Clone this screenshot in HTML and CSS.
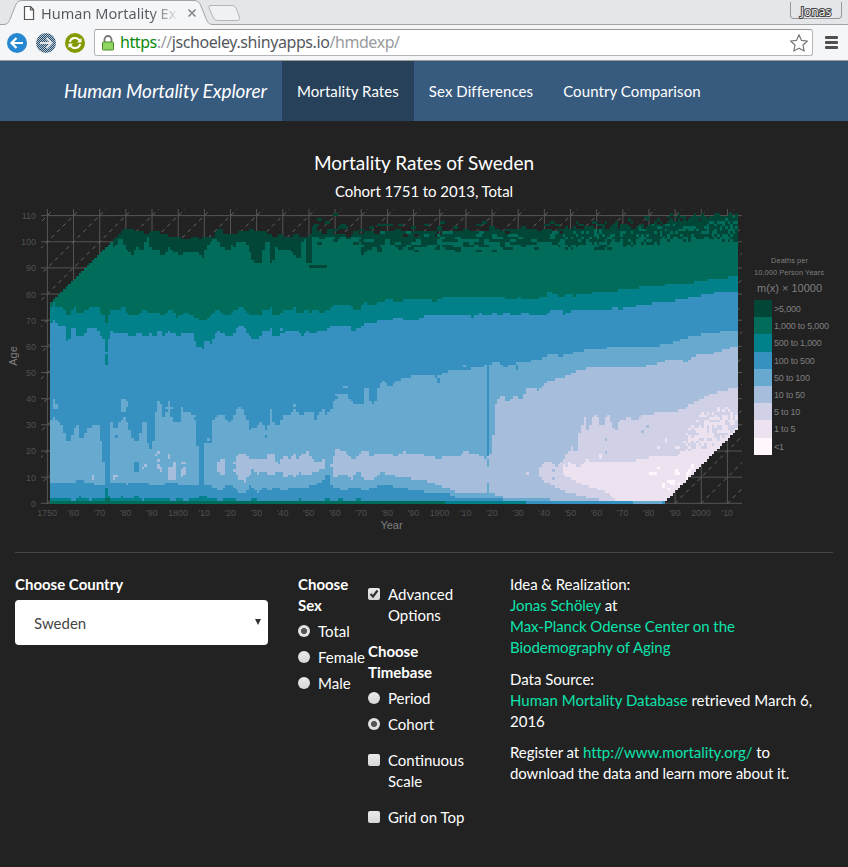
FILE: index.html
```html
<!DOCTYPE html>
<html lang="en">
<head>
<meta charset="utf-8">
<title>Human Mortality Explorer</title>
<link rel="stylesheet" href="styles.css">
</head>
<body>
<div class="browser">
  <div class="tabstrip">
    <svg class="tabshape" width="250" height="26" viewBox="0 0 250 26">
      <path d="M0 24.5H3C8 24.5 9 22 10.500 18L15.500 5.500C17 2 18.500 .5 22 .5H194C198 .5 199.500 2.500 201 6L206 18.500C208 23 209 24.500 213 24.500V26H0Z" fill="#f5f6f7"/>
      <path d="M0 24.500H3C8 24.500 9 22 10.500 18L15.500 5.500C17 2 18.500 .5 22 .5H194C198 .5 199.500 2.500 201 6L206 18.500C208 23 209 24.500 213 24.500H250" fill="none" stroke="#a3a4a6"/>
      <path d="M211 5.500H232Q235 5.500 236 8L239.500 17Q240.500 20.500 237 20.500H218Q214.500 20.500 213.500 18L209 8Q208 5.500 211 5.500Z" fill="#f0f1f3" stroke="#b3b4b6"/>
      <path d="M24.500 6.500H30.500L33.500 9.500V19.500H24.500ZM30.500 6.500V10H33.500" fill="#fff" stroke="#555" stroke-width="1.200"/>
      <path d="M188.500 9.500L195.500 16.500M195.500 9.500L188.500 16.500" stroke="#85878c" stroke-width="1.700"/>
    </svg>
    <span class="tabtitle">Human Mortality Ex</span>
    <span class="user">Jonas</span>
  </div>
  <div class="toolbar">
    <svg class="round" viewBox="0 0 20 20"><circle cx="10" cy="10" r="10" fill="#2588d0"/><path d="M16 10H5M9.500 5L4.500 10L9.500 15" stroke="#fff" stroke-width="2.200" fill="none"/></svg>
    <svg class="round" viewBox="0 0 20 20"><defs><pattern id="chk" width="2" height="2" patternUnits="userSpaceOnUse"><rect width="2" height="2" fill="#b9c3cc"/><rect width="1" height="1" fill="#244e70"/><rect x="1" y="1" width="1" height="1" fill="#244e70"/></pattern></defs><circle cx="10" cy="10" r="10" fill="url(#chk)"/><path d="M4 10H15M10.500 5L15.500 10L10.500 15" stroke="#dfe4e8" stroke-width="2" fill="none"/></svg>
    <svg class="round" viewBox="0 0 20 20"><circle cx="10" cy="10" r="10" fill="#859900"/><path d="M4.800 9A5.300 5.300 0 0 1 14.500 7.500M15.200 11A5.300 5.300 0 0 1 5.500 12.500" stroke="#fff" stroke-width="2" fill="none"/><path d="M16.500 5V9.500H12ZM3.500 15V10.500H8Z" fill="#fff"/></svg>
    <div class="address">
      <svg width="12" height="16" viewBox="0 0 12 16"><path d="M2.500 8V4.500A3.500 3.500 0 0 1 9.500 4.500V8" fill="none" stroke="#777" stroke-width="1.800"/><rect x=".5" y="7" width="11" height="8" rx="1" fill="#8ed65f" stroke="#4c8c2b"/></svg>
      <span class="url"><b>https</b><i>://</i>jschoeley.shinyapps.io<i>/hmdexp/</i></span>
      <svg class="star" width="18" height="18" viewBox="0 0 18 18"><path d="M9 .8L11.400 6.300L17.400 7L13 11L14.200 17L9 14.200L3.800 17L5 11L.6 7L6.600 6.300Z" fill="#fff" stroke="#777" stroke-width="1.200" stroke-linejoin="round"/></svg>
    </div>
    <div class="burger"><span></span><span></span><span></span></div>
  </div>
</div>
<nav class="navbar">
  <a class="brand">Human Mortality Explorer</a>
  <a class="tab active">Mortality Rates</a>
  <a class="tab">Sex Differences</a>
  <a class="tab">Country Comparison</a>
</nav>
<main>
  <h1>Mortality Rates of Sweden</h1>
  <h2>Cohort 1751 to 2013, Total</h2>
  <svg id="plot" class="plot" width="848" height="340" viewBox="0 200 848 340"></svg>
  <hr>
  <div class="controls">
    <section class="country">
      <strong>Choose Country</strong>
      <div class="select"><span>Sweden</span><i class="arrow"></i></div>
    </section>
    <section class="sex">
      <strong>Choose Sex</strong>
      <label><i class="radio on"></i>Total</label>
      <label><i class="radio"></i>Female</label>
      <label><i class="radio"></i>Male</label>
    </section>
    <section class="options">
      <label class="first"><i class="check"><svg width="12" height="12" viewBox="0 0 12 12"><path d="M2.500 6L5 8.500L9.500 2.500" fill="none" stroke="#333" stroke-width="2.200"/></svg></i>Advanced Options</label>
      <strong>Choose Timebase</strong>
      <label><i class="radio"></i>Period</label>
      <label><i class="radio on"></i>Cohort</label>
      <label class="apart"><i class="check"></i>Continuous Scale</label>
      <label class="apart"><i class="check"></i>Grid on Top</label>
    </section>
    <section class="about">
      <p class="snug">Idea &amp; Realization:<br><a>Jonas Schöley</a> at<br><a>Max-Planck Odense Center on the<br>Biodemography of Aging</a></p>
      <p>Data Source:<br><a>Human Mortality Database</a> retrieved March 6,<br>2016</p>
      <p class="snug">Register at <a>http://www.mortality.org/</a> to<br><span class="snugger">download the data and learn more about it.</span></p>
    </section>
  </div>
</main>
<script src="plot.js"></script>
</body>
</html>
```
FILE: styles.css
```css
* { box-sizing: border-box; }
body { margin: 0; background: #222; color: #fff; font: 15px/21px Lato, sans-serif; }
.browser { height: 61px; background: #f5f6f7; border-bottom: 1px solid #9b9b9b; font-family: "Noto Sans", sans-serif; color: #555860; }
.tabstrip { height: 25px; background: #e5e6ea; position: relative; border-bottom: 1px solid #a3a4a6; }
.tabshape { position: absolute; left: 0; top: 0; }
.tabtitle { position: absolute; left: 41px; top: 2px; white-space: nowrap; font-size: 14.5px; line-height: 22px; letter-spacing: .02px; color: transparent; background: linear-gradient(90deg, #555860 82%, rgba(85,88,96,.15)); -webkit-background-clip: text; background-clip: text; }
.user { position: absolute; right: 6px; top: 2px; width: 52px; height: 17px; border: 1px solid #999; border-top: 0; border-radius: 0 0 4px 4px; text-align: center; font-size: 12px; line-height: 19px; color: #eee; -webkit-text-stroke: 2px #444; paint-order: stroke fill; }
.toolbar { height: 35px; display: flex; align-items: center; padding-left: 7px; }
.round { width: 20px; height: 20px; margin-right: 9px; flex: none; }
.address { width: 719px; height: 27px; border: 1px solid #b3b5b8; border-top-color: #999; border-radius: 3px; background: #fff; display: flex; align-items: center; padding: 0 4px 0 7px; }
.url { margin-left: 6px; font-size: 16px; color: #555860; white-space: nowrap; letter-spacing: -.42px; }
.url b { color: #0b8a0b; font-weight: 400; }
.url i { color: #999ba0; font-style: normal; }
.star { margin-left: auto; }
.burger { margin-left: 12px; display: flex; flex-direction: column; gap: 2px; }
.burger span { width: 13px; height: 3px; border-radius: 1px; background: #505050; }
.navbar { height: 60px; background: #375a7f; display: flex; line-height: 60px; padding-left: 49px; }
.navbar a { padding: 0 15px; white-space: nowrap; }
.navbar .brand { font-size: 19px; font-style: italic; width: 233px; letter-spacing: -.08px; }
.tab { letter-spacing: .08px; }
.active { background: #28415b; }
h1, h2 { margin: 0; font-weight: 400; text-align: center; }
h1 { font-size: 19px; line-height: 21px; padding-top: 31px; }
h2 { font-size: 15px; line-height: 21px; padding-top: 8px; height: 27px; letter-spacing: -.06px; }
.plot { display: block; }
.plot text { font-family: "Liberation Sans", sans-serif; }
hr { margin: 12px 15px 0; border: 0; border-top: 1px solid #464646; }
.controls { display: grid; grid-template-columns: 283px 70px 142px 1fr; padding: 21px 0 0 15px; }
.country { width: 253px; }
strong { display: block; font-weight: 700; }
.sex strong { width: 60px; }
.select { margin-top: 5px; height: 45px; background: #fff; border-radius: 4px; color: #464545; display: flex; justify-content: space-between; align-items: center; padding: 2px 7px 0 19px; }
.arrow { border: 3px solid transparent; border-top: 6px solid #333; margin-top: 0; }
label { display: flex; padding-left: 20px; margin-top: 5px; }
label i { flex: none; width: 12px; height: 12px; margin: 4px 8px 0 -20px; background: linear-gradient(#eaeaea, #d7d7d7); }
.radio { border-radius: 50%; }
.on { background: radial-gradient(circle, #555 0 2.700px, #e2e2e2 3.400px); }
.check { border-radius: 2px; }
.check svg { display: block; }
.options { width: 105px; }
.options .first { margin-top: 10px; margin-bottom: 15px; }
.options .apart { margin-top: 15px; }
p { margin: 0 0 11px; white-space: nowrap; }
p + p { margin-bottom: 10px; }
p a { color: #0ce3ac; }
.snug { letter-spacing: -.05px; }
.snugger { letter-spacing: -.1px; }
```
FILE: plot.js
```js
// Lexis surface: one column per cohort, one row per year of age.
var STEP = 2.616, X0 = 50, Y0 = 503.5, COLS = 263, ROWS = 111;
var COLORS = ["#014636", "#016c59", "#02818a", "#3690c0", "#67a9cf", "#a6bddb", "#d0d1e6", "#ece2f0", "#fff7fb"];
var NAMES = [">5,000", "1,000 to 5,000", "500 to 1,000", "100 to 500", "50 to 100", "10 to 50", "5 to 10", "1 to 5", "<1"];

// Contours as flat x,y lists.
var TOP = [50,304,124,229,134,229,134,231,144,231,144,236,152,231,158,231,159,233,167,235,171,236,182,236,182,239,190,239,193,236,197,236,199,239,205,236,214,236,217,229,222,229,223,234,236,234,240,232,246,231,250,229,258,232,262,231,270,234,275,237,280,234,285,238,295,235,305,236,312,235,350,233,420,232,500,230,580,229,640,226,670,222,700,217,738,214];
var DARK = [50,200,112,200,113,245,115,250,118,240,122,239,125,247,130,252,133,255,136,247,142,251,146,241,148,236,150,248,158,250,163,256,168,252,169,247,175,252,181,257,184,252,190,252,194,254,198,251,203,257,206,248,211,242,216,238,217,240,222,247,229,250,231,242,233,251,236,242,246,242,251,254,253,262,262,262,262.1,254,266,242,270,242,270.1,262,275,260,276,246,278,250,283,248,290,251,298,259,301,255,301.1,242,306,240,306.1,262,313,262,316,240,738,220];
var TEAL = [50,307,60,307,64,310,66,315,71,315,73,307,75,307,77,312,84,312,86,310,94,307,100,307,101,312,105,317,106,323,108,321,110,310,120,310,122,307,126,307,128,315,136,315,145,310,150,314,157,312,162,315,170,310,175,312,177,318,185,313,192,315,198,319,205,320,210,317,214,312,218,310,223,315,230,315,233,312,239,307,243,307,246,312,252,315,260,315,263,310,271,308,273,315,278,315,283,310,290,311,295,308,299,314,305,310,310,312,318,309,321,312,329,310,332,305,352,306,355,310,360,309,364,303,370,304,375,306,380,302,387,300,400,302,405,299,420,300,437,301,442,298,480,298,493,297,503,297,509,299,520,298,535,299,545,297,549,291,553,294,562,298,567,294,575,296,580,294,600,292,622,290,627,289,645,287,665,285,690,283,712,279,738,276];
var BLUE = [50,323,53,320,56,324,65,325,66,341,70,338,72,330,75,323,77,335,84,337,88,328,96,329,100,334,104,338,105,345,108,345,110,332,122,333,134,336,140,333,145,337,150,334,156,337,160,328,163,336,170,331,177,337,182,333,193,334,197,345,203,348,206,341,211,343,217,331,223,333,229,337,234,334,238,327,243,325,248,334,255,340,260,337,262,332,270,329,273,337,280,336,286,331,297,331,302,336,308,331,315,335,318,331,328,331,330,325,351,325,352,331,362,327,364,323,375,324,378,320,388,322,395,318,408,320,420,319,425,315,470,315,473,317,480,313,487,317,495,312,500,315,505,312,515,315,527,312,530,315,547,315,549,311,562,311,564,314,570,311,585,311,590,309,610,310,613,307,620,310,625,307,645,305,655,302,675,301,690,298,705,295,722,291,738,291];
var LIGHT = [50,422,54,417,60,422,63,426,66,442,71,442,73,430,76,425,79,425,80,437,84,437,87,427,99,425,101,440,103,451,105,485,109.9,485,110,420,114,427,118,425,123,420,125,417,129,425,131,439,138,440,140,433,143,422,146,422,147,440,150,451,153,443,155,422,157,401,161,401,162,420,166,412,170,410,173,422,180,422,182,412,190,413,195,417,196,437,198,448,199,486,203.9,486,204,445,210,442,212,422,218,414,225,414,228,425,232,419,236,411,240,406,244,411,248,422,250,430,257,426,262,422,265,430,269,425,271,409,273,422,277,427,281,422,284,414,290,414,296,409,299,414,313,412,315,420,320,413,324,409,327,416,331,409,335,399,347,394,352,402,357,404,363,404,365,388,368,388,370,402,375,405,378,388,383,380,390,386,398,380,407,377,420,376,430,375,436,378,445,372,457,370,465,370,478,367,487,366,497,362,505,367,522,362,540,360,548,355,560,356,570,354,585,350,605,348,635,346,655,346,675,342,690,337,705,334,730,331,738,331];
var LIGHT_END = [50,481,58,484,72,482,80,480,90,483,103,485,110,484,120,482,127,484,145,482,153,485,175,483,190,486,204,484,221,490,226,485,235,487,238,492,245,493,250,486,258,492,265,487,270,492,276,487,282,491,295,487,305,488,322,482,326,476,330,484,335,488,345,490,354,487,363,490,375,488,380,484,400,488,420,491,433,493,450,494,456,498,490,498,515,501,738,501];
var MID = [236,460,238,454,246,453,250,460,256,458,264,460,270,453,274,455,278,465,283,456,290,459,294,452,297,460,302,453,308,452,312,458,318,462,323,459,325,459,325.1,500,330.9,500,331,465,333,458,336,449,345,451,350,458,357,458,362,451,368,452,370,456,380,454,388,453,395,456,405,452,410,455,420,453,427,456,440,459,447,456,462,455,465,451,472,454,480,455,487,459,492,453,494,430,493,417,497,401,503,394,507,403,515,397,522,398,527,388,538,390,545,385,550,380,563,378,570,374,583,369,605,367,655,366,660,362,675,359,688,362,692,356,708,355,720,351,730,348,738,346];
var MID_END = [236,470,238,478,245,482,249,475,253,470,258,474,264,471,271,476,277,472,281,472,285,480,290,473,294,478,300,472,306,476,318,471,325,469,331,467,333,477,345,474,352,479,355,474,360,472,364,480,373,480,380,472,395,476,405,478,420,480,430,482,437,485,447,488,460,493,490,493,505,498,540,498,560,501,738,501];
var PALE = [539,467,545,463,550,461,556,466,560,462,566,456,572,446,578,437,583,422,588,430,593,418,597,416,602,420,608,417,612,424,616,430,620,421,627,417,636,420,645,414,658,413,672,412,682,410,690,405,700,399,710,395,725,390,738,388];
var PALE_END = [539,477,545,483,553,485,562,490,570,493,580,495,588,498,610,501,738,501];
var PINK = [562,468,570,465,580,466,588,460,600,463,612,462,640,460,652,457,675,456,690,451,715,445,738,427];
var PINK_END = [562,473,572,480,580,484,590,487,600,490,608,493,612,498,620,501,738,501];
// Upper limit of the zone where the two palest classes mix.
var MIX = [679,456,684,440,692,424,697,414,710,411,725,405,738,416];

// Isolated patches: x, y, width, height, colour index.
var PATCHES = [
  [53,302,2,4,2],[105,345,3,6,2],[105,354,3,11,2],[75,323,2,8,2],[71,329,5,2,3],
  [270,328,3,3,3],[265,333,3,3,3],[280,328,3,3,3],[309,265,18,3,0],[122,214,5,3,-1],[332,213,5,3,0],[317,218,5,3,0],[325,221,5,3,0],[312,226,5,3,0],
  [53,399,2,10,4],[55,404,3,5,4],[122,399,4,13,4],[121,404,7,3,4],[126,401,2,5,4],[115,425,3,3,3],[115,435,3,3,3],[134,461,5,11,3],
  [168,401,2,21,4],[165,406,7,3,4],[165,412,5,3,4],[181,406,2,6,4],[181,412,5,3,4],[194,414,2,3,4],
  [92,474,2,6,5],[113,474,5,3,5],[113,477,3,3,5],[142,467,3,2,5],[144,464,3,3,5],[157,451,3,3,5],[155,454,2,2,5],[157,459,3,2,5],[157,464,3,5,5],[160,467,2,5,5],
  [168,453,2,6,5],[168,466,7,13,5],[173,461,3,10,5],[182,461,4,3,5],[181,469,4,6,5],[184,466,2,8,5],[181,474,3,3,5],[217,461,8,10,5],[220,458,4,16,5],[233,461,4,3,5],[233,469,4,3,5],
  [204,440,4,3,3],[208,437,3,3,4],[264,435,3,3,3],[293,404,3,2,4],[343,386,5,2,4],[335,393,12,3,4],[364,388,5,15,4],[210,430,2,13,3],
  [325,474,4,11,3],[205,469,2,6,4],[463,365,2,3,4],[437,379,3,3,3],[515,366,3,3,3],
  [526,472,3,3,6],[562,464,3,10,7],[567,462,3,3,7],[552,469,3,3,5],[552,477,3,3,5],[583,417,2,24,6],[573,438,5,12,5],[604,438,3,2,5],[604,450,3,3,5],[594,414,2,5,6],[607,414,3,12,6],[600,420,3,4,5],[600,455,2,4,7],[641,430,3,3,5],[646,425,3,3,5],[657,446,3,3,7],[665,438,2,4,7],[676,446,3,3,7],[597,492,3,3,6],[602,495,4,5,6],
  [649,472,4,2,8],[654,471,3,3,8],[656,467,2,2,8],[662,482,3,5,8],[667,480,3,3,8],[670,480,5,5,8],[667,487,3,3,8],[678,482,2,3,8],[675,469,3,5,8],[678,471,3,3,8],[685,471,4,8,8],[688,469,3,5,8],[691,464,2,5,8],
  [487,360,2,95,3],[487,459,2,8,4],[487,482,2,15,4],[487,497,2,5,3],
  [50,498,21,5,2],[76,498,14,5,2],[92,498,50,5,2],[144,498,26,5,2],[176,498,7,5,2],[190,498,27,5,2],[223,498,12,5,2],[251,498,6,5,2],[298,498,3,5,2],[325,498,4,5,2],[338,498,4,5,2],[356,498,4,5,2],
  [79,495,2,3,2],[105,487,3,11,2],[108,495,2,3,2],[121,495,2,3,2],[134,495,5,3,2],[199,495,8,3,2],
  [50,501,396,3,1],[105,498,5,6,1],[446,501,80,3,2],[526,501,107,3,3],[633,501,30,3,4]
];

function at(line, x) {
  if (x < line[0]) return Infinity;
  for (var i = 2; i < line.length; i += 2) {
    if (x <= line[i]) {
      var t = (x - line[i - 2]) / (line[i] - line[i - 2] || 1);
      return line[i - 1] + t * (line[i + 1] - line[i - 1]);
    }
  }
  return line[line.length - 1];
}
function noise(a, b) {
  var h = Math.imul(a + 101, 374761393) + Math.imul(b + 57, 668265263);
  h = Math.imul(h ^ (h >>> 13), 1274126177);
  h = Math.imul(h ^ (h >>> 15), 2246822519);
  return ((h ^ (h >>> 16)) >>> 0) / 4294967296;
}
function classify(x, y, col, age) {
  if (x + y > 1166.500) return -1;
  var top = at(TOP, x), run = x < 560 ? 2 : 1;
  var r = noise(Math.floor((col + age * 3 % 5) / run), age);
  if (x > 312) {
    var low = top + (x < 360 ? 14 : 21);
    if (x > 660) low = 241;
    if (y < top - 10) return -1;
    if (y < top) return r < (x > 640 ? .45 : .32) * (1 - (top - y) / 13) && y > 213 ? 0 : -1;
    if (y < low) {
      var f = (y - top) / (low - top);
      if (f < .18 && r > .86) return -1;
      return r < (x < 360 ? .45 : .78) - .45 * f * f ? 0 : 1;
    }
  } else {
    if (y < top) return -1;
    if (y < at(DARK, x)) return 0;
  }
  if (y < at(TEAL, x)) return 1;
  if (y < at(BLUE, x)) return 2;
  if (y < at(LIGHT, x)) return 3;
  if (y > at(PINK, x) && y < at(PINK_END, x)) return 7;
  if (y > at(PALE, x) && y < at(PALE_END, x)) return y > at(MIX, x) && r < .52 ? 7 : 6;
  if (y > at(MID, x) && y < at(MID_END, x)) return 5;
  return y < at(LIGHT_END, x) ? 4 : 3;
}
var paths = COLORS.map(function () { return ""; });
for (var c = 0; c < COLS; c++) {
  var left = Math.round(X0 + c * STEP), right = Math.round(X0 + (c + 1) * STEP), cx = X0 + (c + .5) * STEP;
  for (var a = 0; a < ROWS; a++) {
    var lo = Math.round(Y0 - a * STEP), hi = Math.round(Y0 - (a + 1) * STEP), cy = Y0 - (a + .5) * STEP;
    var k = classify(cx, cy, c, a);
    PATCHES.forEach(function (p) {
      if (cx >= p[0] - .2 && cx < p[0] + p[2] + .3 && cy >= p[1] && cy < p[1] + p[3] + .2 && cx + cy < 1166.500) k = p[4];
    });
    if (k >= 0) paths[k] += "M" + left + " " + hi + "H" + right + "V" + lo + "H" + left + "Z";
  }
}

var DEC = 26.155, GX = 47.4, GY = 503.3, out = "", i;
out += '<defs><clipPath id="panel"><rect x="41" y="209" width="701" height="295"/></clipPath></defs>';
out += '<g stroke="#555" stroke-width="1" fill="none" clip-path="url(#panel)">';
for (i = 0; i <= 26; i++) out += '<path d="M' + (GX + i * DEC) + ' 209V503.300"/>';
for (i = 0; i <= 11; i++) out += '<path d="M41 ' + (GY - i * DEC) + 'H742"/>';
out += '<g stroke-dasharray="4 4" stroke="#686868">';
for (i = -12; i <= 26; i++) {
  var sx = GX + i * DEC - 6;
  out += '<path d="M' + sx + ' ' + (GY + 6) + 'L' + (sx + 310) + ' ' + (GY - 304) + '"/>';
}
out += '</g></g><g shape-rendering="crispEdges">';
paths.forEach(function (d, n) { out += '<path fill="' + COLORS[n] + '" d="' + d + '"/>'; });
out += '</g><g fill="#505050" font-size="9" text-anchor="end">';
for (i = 0; i <= 11; i++) out += '<text x="36" y="' + (GY - i * DEC + 3.500) + '">' + i * 10 + '</text>';
out += '</g><g fill="#505050" font-size="8.900" text-anchor="middle">';
for (i = 0; i <= 26; i++) {
  var yr = 1750 + i * 10;
  out += '<text x="' + (GX + i * DEC - .2) + '" y="516">' + (yr === 1750 || yr % 100 === 0 ? yr : "'" + String(yr).slice(2)) + '</text>';
}
out += '</g><g fill="#7f7f7f" font-size="11" text-anchor="middle"><text x="391.500" y="529">Year</text>';
out += '<text transform="translate(17 356) rotate(-90)">Age</text>';
out += '<text x="789.500" y="292" textLength="65">m(x) × 10000</text>';
out += '<text x="789.500" y="263" font-size="7.400" textLength="37">Deaths per</text>';
out += '<text x="789" y="275" font-size="7.400" textLength="70">10,000 Person Years</text></g>';
NAMES.forEach(function (name, n) {
  var y = 300 + n * 17.200;
  out += '<rect shape-rendering="crispEdges" x="754" y="' + y + '" width="18" height="17.300" fill="' + COLORS[n] + '"/>';
  out += '<text x="774" y="' + (y + 12) + '" font-size="9" letter-spacing="-.2" fill="#7f7f7f">' + name + '</text>';
});
document.getElementById("plot").innerHTML = out;
```
